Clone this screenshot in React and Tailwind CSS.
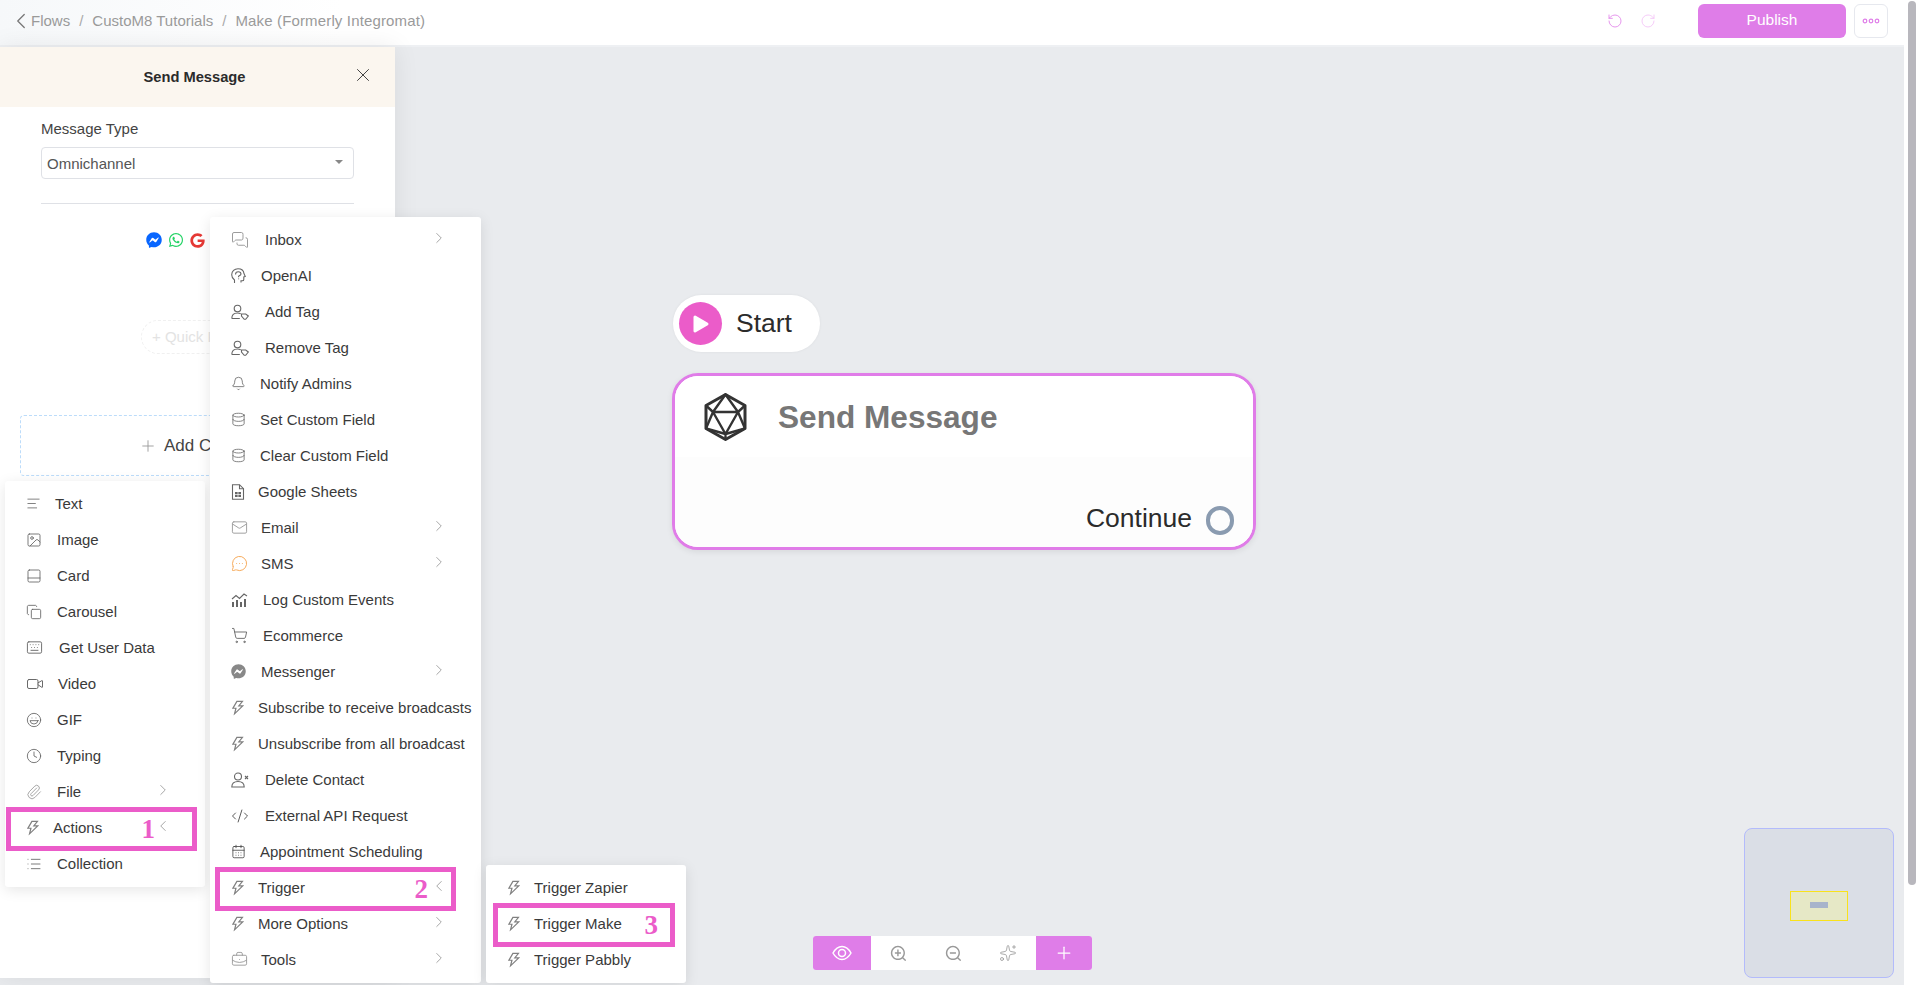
import {
  AlignLeft, Image, PanelBottom, Copy, Keyboard, Video, Laugh, Clock, Paperclip, List,
  MessagesSquare, Bell, Database, Mail, MessageCircleMore, ShoppingCart, CodeXml, CalendarDays, BriefcaseBusiness,
  ChevronLeft, ChevronRight, Plus, Sparkles, RotateCcw, RotateCw, X,
} from "lucide-react";
import { AiOutlineThunderbolt, AiOutlineZoomIn, AiOutlineZoomOut } from "react-icons/ai";
import { FaFacebookMessenger, FaWhatsapp, FaGoogle } from "react-icons/fa";

const font = "font-['Liberation_Sans',Arial,sans-serif]";

function L({ as: I, size = 16, className = "text-[#666]" }) {
  return <I size={size} strokeWidth={1.3} className={className} />;
}

function Bolt() {
  return <AiOutlineThunderbolt size={18} className="text-[#808080] -ml-[2px]" />;
}

function UserTag() {
  return (
    <svg width="18" height="16" viewBox="0 0 18 16" fill="none" stroke="#666" strokeWidth="1.100">
      <circle cx="6.500" cy="4.500" r="3.300" />
      <path d="M.8 14.500c0-3.600 2.400-5.500 5.700-5.500 1.200 0 2.300.3 3.200.8M.8 14.500h8" />
      <path d="M10.500 10h4.200l2.600 2-2.600 3.300h-1.500l-2.700-3.300z" />
    </svg>
  );
}

function UserX() {
  return (
    <svg width="18" height="16" viewBox="0 0 18 16" fill="none" stroke="#666" strokeWidth="1.100">
      <circle cx="7" cy="4.500" r="3.500" />
      <path d="M.8 15c0-3.800 2.500-5.500 6.200-5.500s6.200 1.700 6.200 5.500z" />
      <path d="M14 4l3 3M17 4l-3 3" />
    </svg>
  );
}

function Head() {
  return (
    <svg width="15" height="16" viewBox="0 0 15 16" fill="none" stroke="#666" strokeWidth="1.100">
      <path d="M3.500 15v-3C1.500 10.500.7 8.800.7 6.700.7 3.200 3.500.7 7 .7c3.300 0 5.700 2 6 5l1.300 2.800-1.500.5v2.500c0 .8-.6 1.300-1.500 1.300H10v1.700" />
      <path d="M4.500 6.500c0-1.700 1.200-2.800 2.800-2.800 1.500 0 2.700 1 2.700 2.400 0 1.100-1.400 1.500-2.400 2.100v1M7.600 10.500v.8" />
    </svg>
  );
}

function Sheet() {
  return (
    <svg width="14" height="16" viewBox="0 0 14 16" fill="none" stroke="#666" strokeWidth="1.100">
      <path d="M1.500.7h7l4 4v10.600h-11z" />
      <path d="M8.500.7v4h4" />
      <path d="M4 8h6v5H4z" fill="#666" stroke="none" />
      <path d="M4 10.500h6M7 8v5" stroke="#fff" strokeWidth=".7" />
    </svg>
  );
}

function Stats() {
  return (
    <svg width="17" height="16" viewBox="0 0 17 16" fill="none" stroke="#666" strokeWidth="1.100">
      <path d="M1 7l4-3.500 3.500 3L13 2l3 2" />
      <path d="M2 10v5M6 8v7M10 10v5M14 7v8" strokeWidth="2" />
    </svg>
  );
}

function Icosahedron() {
  return (
    <svg width="43" height="48" viewBox="0 0 43 48" fill="none" stroke="#333" strokeWidth="2.400" strokeLinejoin="round">
      <path d="M21.500 1.500L41 12.500v23L21.500 46.500 2 35.500v-23z" strokeWidth="3" />
      <path d="M21.500 1.500L9 19h25zM9 19l12.500 22L34 19M2 12.500L9 19M41 12.500L34 19M21.500 41v5.500M9 19L2 35.500M34 19l7 16.500M2 35.500l19.500 5.500L41 35.500" />
    </svg>
  );
}

function Eye() {
  return (
    <svg width="20" height="16" viewBox="0 0 20 16" fill="none" stroke="#fff" strokeWidth="1.500">
      <path d="M1 8c2.500-4.500 5.500-6.500 9-6.500s6.500 2 9 6.500c-2.500 4.500-5.500 6.500-9 6.500S3.500 12.500 1 8z" />
      <circle cx="10" cy="8" r="3.500" />
    </svg>
  );
}

function Dots() {
  return (
    <svg width="18" height="6" viewBox="0 0 18 6" fill="none" stroke="#df7de8" strokeWidth="1.200">
      <circle cx="3" cy="3" r="1.800" />
      <circle cx="9" cy="3" r="1.800" />
      <circle cx="15" cy="3" r="1.800" />
    </svg>
  );
}

const menuOne = [
  { label: "Text", icon: <L as={AlignLeft} size={15} />, iw: "w-[29px]" },
  { label: "Image", icon: <L as={Image} size={16} />, iw: "w-[31px]" },
  { label: "Card", icon: <L as={PanelBottom} size={16} />, iw: "w-[31px]" },
  { label: "Carousel", icon: <L as={Copy} size={16} />, iw: "w-[31px]" },
  { label: "Get User Data", icon: <L as={Keyboard} size={17} />, iw: "w-[33px]" },
  { label: "Video", icon: <L as={Video} size={18} />, iw: "w-[32px]" },
  { label: "GIF", icon: <L as={Laugh} size={16} />, iw: "w-[31px]" },
  { label: "Typing", icon: <L as={Clock} size={16} />, iw: "w-[31px]" },
  { label: "File", icon: <L as={Paperclip} size={16} className="text-[#999]" />, iw: "w-[31px]", more: "right" },
  { label: "Actions", icon: <Bolt />, iw: "w-[27px]", more: "left", mark: "1" },
  { label: "Collection", icon: <L as={List} size={16} />, iw: "w-[31px]" },
];

const menuTwo = [
  { label: "Inbox", icon: <L as={MessagesSquare} size={18} className="text-[#999]" />, iw: "w-[34px]", more: "right" },
  { label: "OpenAI", icon: <Head />, iw: "w-[30px]" },
  { label: "Add Tag", icon: <UserTag />, iw: "w-[34px]" },
  { label: "Remove Tag", icon: <UserTag />, iw: "w-[34px]" },
  { label: "Notify Admins", icon: <L as={Bell} size={15} />, iw: "w-[29px]" },
  { label: "Set Custom Field", icon: <L as={Database} size={15} />, iw: "w-[29px]" },
  { label: "Clear Custom Field", icon: <L as={Database} size={15} />, iw: "w-[29px]" },
  { label: "Google Sheets", icon: <Sheet />, iw: "w-[27px]" },
  { label: "Email", icon: <L as={Mail} size={17} className="text-[#999]" />, iw: "w-[30px]", more: "right" },
  { label: "SMS", icon: <L as={MessageCircleMore} size={17} className="text-[#f5a34d]" />, iw: "w-[30px]", more: "right" },
  { label: "Log Custom Events", icon: <Stats />, iw: "w-[32px]" },
  { label: "Ecommerce", icon: <L as={ShoppingCart} size={17} />, iw: "w-[32px]" },
  { label: "Messenger", icon: <FaFacebookMessenger size={15} className="text-[#888]" />, iw: "w-[30px]", more: "right" },
  { label: "Subscribe to receive broadcasts", icon: <Bolt />, iw: "w-[27px]" },
  { label: "Unsubscribe from all broadcast", icon: <Bolt />, iw: "w-[27px]" },
  { label: "Delete Contact", icon: <UserX />, iw: "w-[34px]" },
  { label: "External API Request", icon: <L as={CodeXml} size={18} className="text-[#555]" />, iw: "w-[34px]" },
  { label: "Appointment Scheduling", icon: <L as={CalendarDays} size={15} className="text-[#444]" />, iw: "w-[29px]" },
  { label: "Trigger", icon: <Bolt />, iw: "w-[27px]", more: "left", mark: "2" },
  { label: "More Options", icon: <Bolt />, iw: "w-[27px]", more: "right" },
  { label: "Tools", icon: <L as={BriefcaseBusiness} size={17} className="text-[#999]" />, iw: "w-[30px]", more: "right" },
];

const menuThree = [
  { label: "Trigger Zapier", icon: <Bolt />, iw: "w-[27px]" },
  { label: "Trigger Make", icon: <Bolt />, iw: "w-[27px]", mark: "3" },
  { label: "Trigger Pabbly", icon: <Bolt />, iw: "w-[27px]" },
];

function MenuRow({ item, boxClass, markClass }) {
  return (
    <div className="relative h-9 flex items-center pl-[21px] pr-[33px] pb-[3px] text-[15px] leading-none text-[#3a3a3a]">
      <span className={`${item.iw} shrink-0 flex items-center`}>{item.icon}</span>
      <span className="whitespace-nowrap">{item.label}</span>
      {item.more === "right" && <ChevronRight size={18} strokeWidth={1} className="ml-auto -mt-[3px] text-[#888]" />}
      {item.more === "left" && <ChevronLeft size={18} strokeWidth={1} className="ml-auto -mt-[3px] text-[#888]" />}
      {item.mark && (
        <>
          <span className={`absolute border-[5px] border-[#eb5cc9] ${boxClass}`} />
          <span className={`absolute font-['Liberation_Serif',serif] font-bold text-[27px] leading-none text-[#eb5cc9] ${markClass}`}>{item.mark}</span>
        </>
      )}
    </div>
  );
}

function Menu({ items, className, boxClass, markClass }) {
  return (
    <div className={`absolute bg-white rounded-[3px] pt-[6px] pb-[4px] shadow-[0_3px_14px_rgba(0,0,0,0.1)] ${className}`}>
      {items.map((item) => (
        <MenuRow key={item.label} item={item} boxClass={boxClass} markClass={markClass} />
      ))}
    </div>
  );
}

export default function App() {
  return (
    <div className={`relative w-[1920px] h-[985px] overflow-hidden flex bg-white ${font}`}>
      <div className="w-[1904px] flex flex-col">
        {/* top bar */}
        <div className="h-[47px] shrink-0 border-b-2 border-[#eef0f3] bg-gradient-to-r from-[#f6f8fa] to-white to-[18%] flex items-center pl-[9px] pr-[16px] pb-[3px] text-[15px] text-[#9a9a9a]">
          <ChevronLeft size={26} strokeWidth={1.2} className="text-[#777] -mx-[1px]" />
          <span className="-ml-[2px]">Flows</span>
          <span className="mx-[9px] text-[#aaa]">/</span>
          <span>CustoM8 Tutorials</span>
          <span className="mx-[9px] text-[#aaa]">/</span>
          <span className="tracking-[0.15px]">Make (Formerly Integromat)</span>
          <div className="ml-auto flex items-center">
            <RotateCcw size={16} strokeWidth={1.4} className="text-[#e48fec]" />
            <RotateCw size={16} strokeWidth={1.4} className="ml-[17px] text-[#f4c8f7]" />
            <button className="ml-[42px] w-[148px] h-[34px] rounded-[6px] bg-[#df7de8] text-white text-[15.500px] pb-[2px]">Publish</button>
            <button className="ml-2 w-[34px] h-[34px] rounded-[6px] bg-white border border-[#e6e8ee] flex items-center justify-center">
              <Dots />
            </button>
          </div>
        </div>

        <div className="flex-1 flex items-start bg-[#e9ebee] relative">
          {/* side panel */}
          <div className="w-[395px] h-[931px] bg-white shrink-0 shadow-[0_0_24px_rgba(0,0,0,0.08)]">
            <div className="h-[60px] bg-[#fbf6ef] relative flex items-center justify-center pr-[6px]">
              <span className="text-[14.700px] font-bold text-[#2b2b2b]">Send Message</span>
              <X size={22} strokeWidth={1} className="absolute left-[352px] top-[4px] mt-[13px] text-[#333]" />
            </div>
            <div className="px-[41px]">
              <div className="mt-[12px] text-[15px] leading-5 text-[#444]">Message Type</div>
              <div className="mt-[8px] h-[32px] border border-[#dfe1e6] rounded-[4px] flex items-center pl-[5px] pr-[10px] text-[15px] text-[#555]">
                <span className="mt-[2px]">Omnichannel</span>
                <span className="ml-auto -mt-[2px] w-0 h-0 border-x-[4px] border-x-transparent border-t-[4px] border-t-[#888]" />
              </div>
              <div className="mt-[24px] border-t border-[#dfe1e6]" />
              <div className="mt-[28px] flex items-center gap-[6px] pl-[105px]">
                <FaFacebookMessenger size={16} className="text-[#0866ff]" />
                <FaWhatsapp size={16} className="text-[#25d366]" />
                <FaGoogle size={15} className="text-[#e53935]" />
              </div>
            </div>
            <div className="mt-[72px] ml-[141px] w-[160px] h-[34px] rounded-full border border-dashed border-[#f0f0f0] flex items-center pl-[10px] text-[15px] text-[#e3e3e3]">
              + Quick Reply
            </div>
            <div className="mt-[61px] mx-[20px] h-[61px] rounded-[4px] border border-dashed border-[#bcdcfa] flex items-center pl-[118px] text-[17px] text-[#444]">
              <Plus size={18} strokeWidth={1.2} className="text-[#999] mr-[7px]" />
              Add Content
            </div>
          </div>

          {/* canvas nodes */}
          <div className="absolute left-[673px] top-[248px] w-[147px] h-[57px] rounded-full bg-white flex items-center pl-[6px] shadow-[0_0_3px_rgba(0,0,0,0.06)]">
            <span className="w-[43px] h-[43px] rounded-full bg-[#eb5cc9] flex items-center justify-center">
              <svg width="18" height="20" viewBox="0 0 18 20">
                <path d="M3 3l12 7-12 7z" fill="#fff" stroke="#fff" strokeWidth="3" strokeLinejoin="round" />
              </svg>
            </span>
            <span className="ml-[14px] text-[26.500px] leading-none text-[#2b2b2b]">Start</span>
          </div>

          <div className="absolute left-[672px] top-[326px] w-[584px] h-[177px] rounded-[26px] border-[3px] border-[#e07ce8] bg-white overflow-hidden shadow-[0_2px_6px_rgba(0,0,0,0.08)] flex flex-col">
            <div className="h-[81px] bg-white relative flex items-start pl-[29px] pt-[17px]">
              <Icosahedron />
              <span className="ml-[31px] mt-[6px] text-[31.600px] leading-9 font-bold text-[#777]">Send Message</span>
            </div>
            <div className="flex-1 bg-[#fdfdfd] flex items-end justify-end pr-[19px] pb-[11px]">
              <span className="text-[26.500px] leading-[29px] text-[#2b2b2b] mb-[3px]">Continue</span>
              <span className="ml-[14px] w-[28px] h-[29px] rounded-full border-[4px] border-[#8a9bb0] mb-[1px]" />
            </div>
          </div>
        </div>
      </div>

      {/* scrollbar */}
      <div className="w-4 shrink-0 bg-white pl-1 pt-px">
        <div className="w-2 h-[884px] rounded-full bg-[#b8b7bd]" />
      </div>

      {/* toolbar */}
      <div className="absolute left-[813px] top-[936px] w-[279px] h-[34px] flex rounded-[3px] overflow-hidden bg-white">
        <div className="w-[58px] bg-[#df7de8] flex items-center justify-center"><Eye /></div>
        <div className="flex-1 flex items-center text-[#999] pl-[18px] gap-[36px]">
          <AiOutlineZoomIn size={19} />
          <AiOutlineZoomOut size={19} />
          <Sparkles size={18} strokeWidth={1.1} />
        </div>
        <div className="w-[56px] bg-[#df7de8] flex items-center justify-center">
          <Plus size={20} strokeWidth={1.5} className="text-white" />
        </div>
      </div>

      {/* minimap */}
      <div className="absolute left-[1744px] top-[828px] w-[150px] h-[150px] rounded-[8px] border border-[#b3bbfb] bg-[#dadee6] flex items-center justify-center">
        <div className="w-[58px] h-[30px] border border-[#f9e21c] bg-[#e6e8c6] flex items-center justify-center pb-[2px] mt-[6px]">
          <div className="w-[18px] h-[6px] bg-[#a8b4cb]" />
        </div>
      </div>

      {/* open menus */}
      <Menu items={menuOne} className="left-[5px] top-[481px] w-[200px]" boxClass="left-[1px] right-[8px] top-[-4px] bottom-[-4px]" markClass="right-[50px] top-[5px]" />
      <Menu items={menuTwo} className="left-[210px] top-[217px] w-[271px]" boxClass="left-[5px] right-[25px] top-[-4px] bottom-[-4px]" markClass="right-[53px] top-[5px]" />
      <Menu items={menuThree} className="left-[486px] top-[865px] w-[200px]" boxClass="left-[7px] right-[11px] top-[-4px] bottom-[-4px]" markClass="right-[28px] top-[5px]" />
    </div>
  );
}
